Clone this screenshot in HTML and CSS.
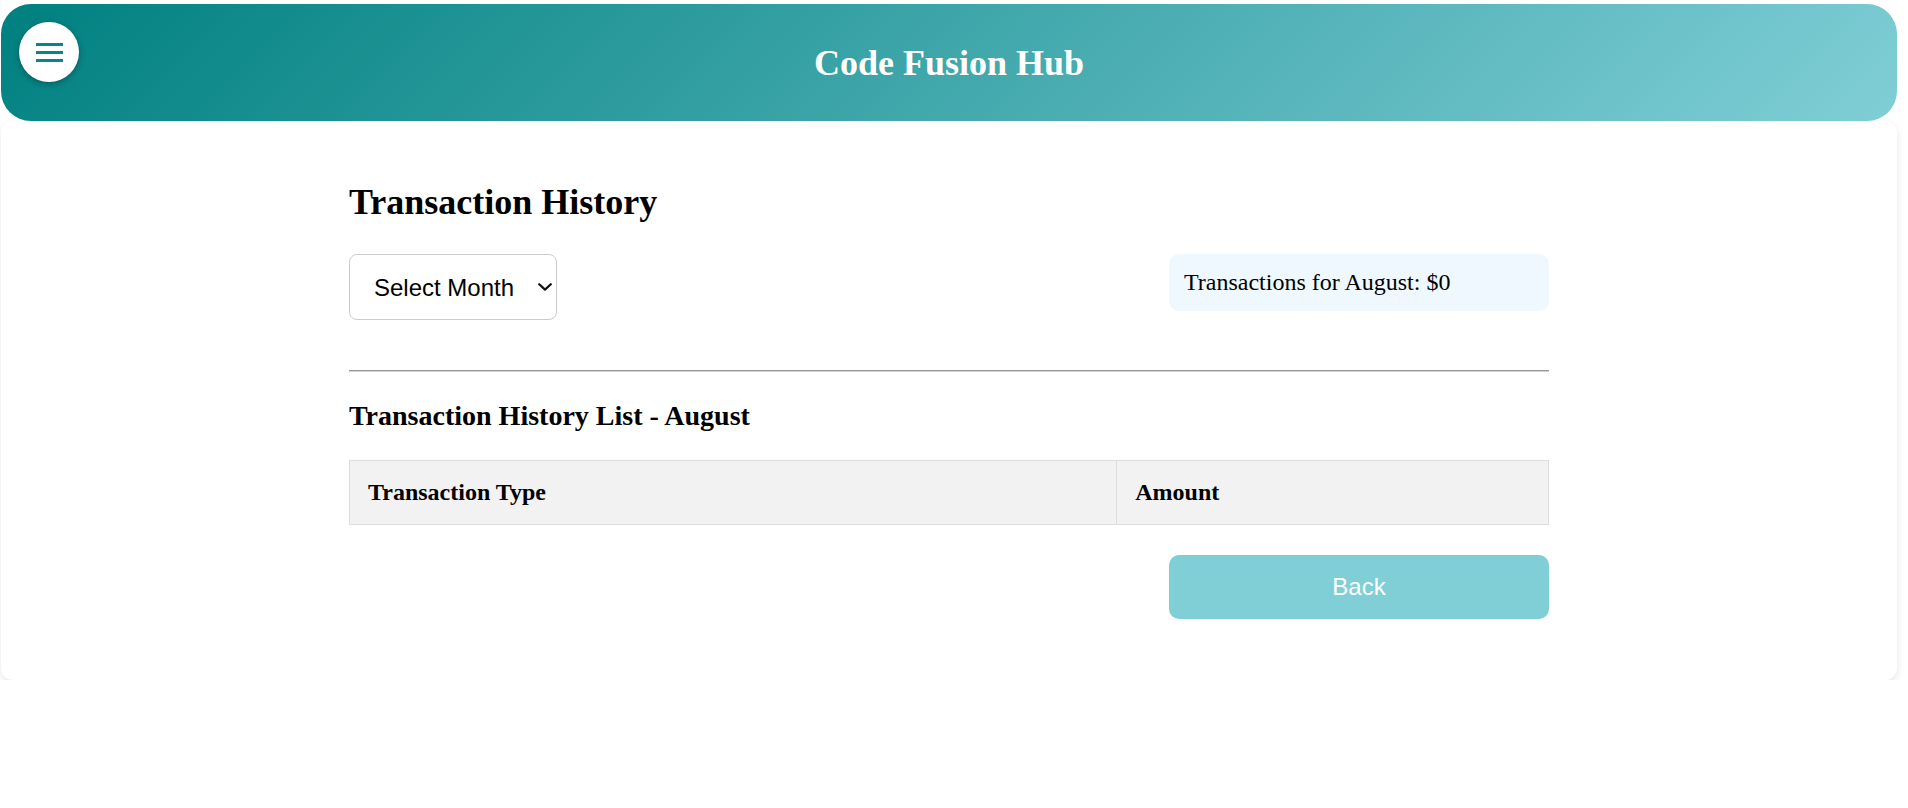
FILE: index.html
```html
<!DOCTYPE html>
<html lang="en">
<head>
<meta charset="utf-8">
<title>Code Fusion Hub - Transaction History</title>
<link rel="stylesheet" href="styles.css">
</head>
<body>
<div class="app">
  <header class="topbar">
    <button class="menu-btn" type="button" aria-label="Menu">
      <svg width="27" height="19" viewBox="0 0 27 19" aria-hidden="true">
        <rect x="0" y="0" width="27" height="3" fill="#0a8784"/>
        <rect x="0" y="8" width="27" height="3" fill="#0a8784"/>
        <rect x="0" y="16" width="27" height="3" fill="#0a8784"/>
      </svg>
    </button>
    <h1 class="brand">Code Fusion Hub</h1>
  </header>
  <main class="card">
    <div class="content">
      <h2 class="page-title">Transaction History</h2>
      <div class="controls">
        <span class="select-wrap">
          <select class="month-select">
            <option>Select Month</option>
          </select>
          <svg class="select-arrow" width="14" height="8" viewBox="0 0 14 8" aria-hidden="true">
            <path d="M1.2 1.2 L7 6.6 L12.8 1.2" fill="none" stroke="#111" stroke-width="2.2" stroke-linecap="round" stroke-linejoin="round"/>
          </svg>
        </span>
        <div class="summary">Transactions for August: $0</div>
      </div>
      <hr class="divider">
      <h3 class="list-title">Transaction History List - August</h3>
      <table class="tx-table">
        <thead>
          <tr>
            <th>Transaction Type</th>
            <th>Amount</th>
          </tr>
        </thead>
        <tbody></tbody>
      </table>
      <div class="actions">
        <button class="back-btn" type="button">Back</button>
      </div>
    </div>
  </main>
</div>
</body>
</html>
```
FILE: styles.css
```css
html, body {
  margin: 0;
  padding: 0;
  background: #ffffff;
}

body {
  font-family: "Liberation Serif", "Times New Roman", serif;
  color: #000;
}

.app {
  margin: 4px 11px 0 1px;
}

.topbar {
  position: relative;
  height: 117px;
  border-radius: 30px;
  background: linear-gradient(135deg, #008080 0%, #80ced6 100%);
  display: flex;
  align-items: center;
  justify-content: center;
  z-index: 2;
}

.menu-btn {
  position: absolute;
  left: 18px;
  top: 18px;
  width: 60px;
  height: 60px;
  border: none;
  border-radius: 50%;
  background: #ffffff;
  box-shadow: 0 2px 6px rgba(0, 0, 0, 0.3);
  display: flex;
  align-items: center;
  justify-content: center;
  padding: 0;
}

.menu-btn svg {
  display: block;
}

.brand {
  margin: 0;
  color: #ffffff;
  font-size: 36px;
  font-weight: bold;
}

.card {
  background: #ffffff;
  border-radius: 12px;
  box-shadow: 0 3px 8px rgba(0, 0, 0, 0.1);
  padding: 60px 0 61px;
}

.content {
  width: 1200px;
  margin: 0 auto;
}

.page-title {
  margin: 0 0 31px;
  font-size: 36px;
  font-weight: bold;
}

.controls {
  display: flex;
  justify-content: space-between;
  align-items: flex-start;
}

.select-wrap {
  position: relative;
  display: inline-block;
}

.month-select {
  display: block;
  width: 208px;
  height: 66px;
  box-sizing: border-box;
  padding: 0 30px 0 24px;
  font-family: "Liberation Sans", Arial, sans-serif;
  font-size: 24px;
  color: #000;
  background-color: #ffffff;
  border: 1px solid #cccccc;
  border-radius: 8px;
  -webkit-appearance: none;
  appearance: none;
}

.select-arrow {
  position: absolute;
  right: 5px;
  top: 29px;
  pointer-events: none;
}

.summary {
  width: 380px;
  box-sizing: border-box;
  padding: 15px;
  background: #f0f8ff;
  border-radius: 10px;
  font-size: 24px;
}

.divider {
  margin: 50px 0 28px;
  border: none;
  border-top: 1px solid #999999;
  border-bottom: 1px solid #d0d0d0;
  height: 0;
}

.list-title {
  margin: 0 0 28px;
  font-size: 28px;
  font-weight: bold;
}

.tx-table {
  width: 100%;
  border-collapse: collapse;
}

.tx-table th {
  background: #f2f2f2;
  border: 1px solid #dddddd;
  padding: 18px 18px;
  text-align: left;
  font-size: 24px;
  font-weight: bold;
}

.actions {
  display: flex;
  justify-content: flex-end;
  margin-top: 30px;
}

.back-btn {
  width: 380px;
  height: 64px;
  border: none;
  border-radius: 10px;
  background: #80ced6;
  color: #ffffff;
  font-family: "Liberation Sans", Arial, sans-serif;
  font-size: 24px;
}
```
